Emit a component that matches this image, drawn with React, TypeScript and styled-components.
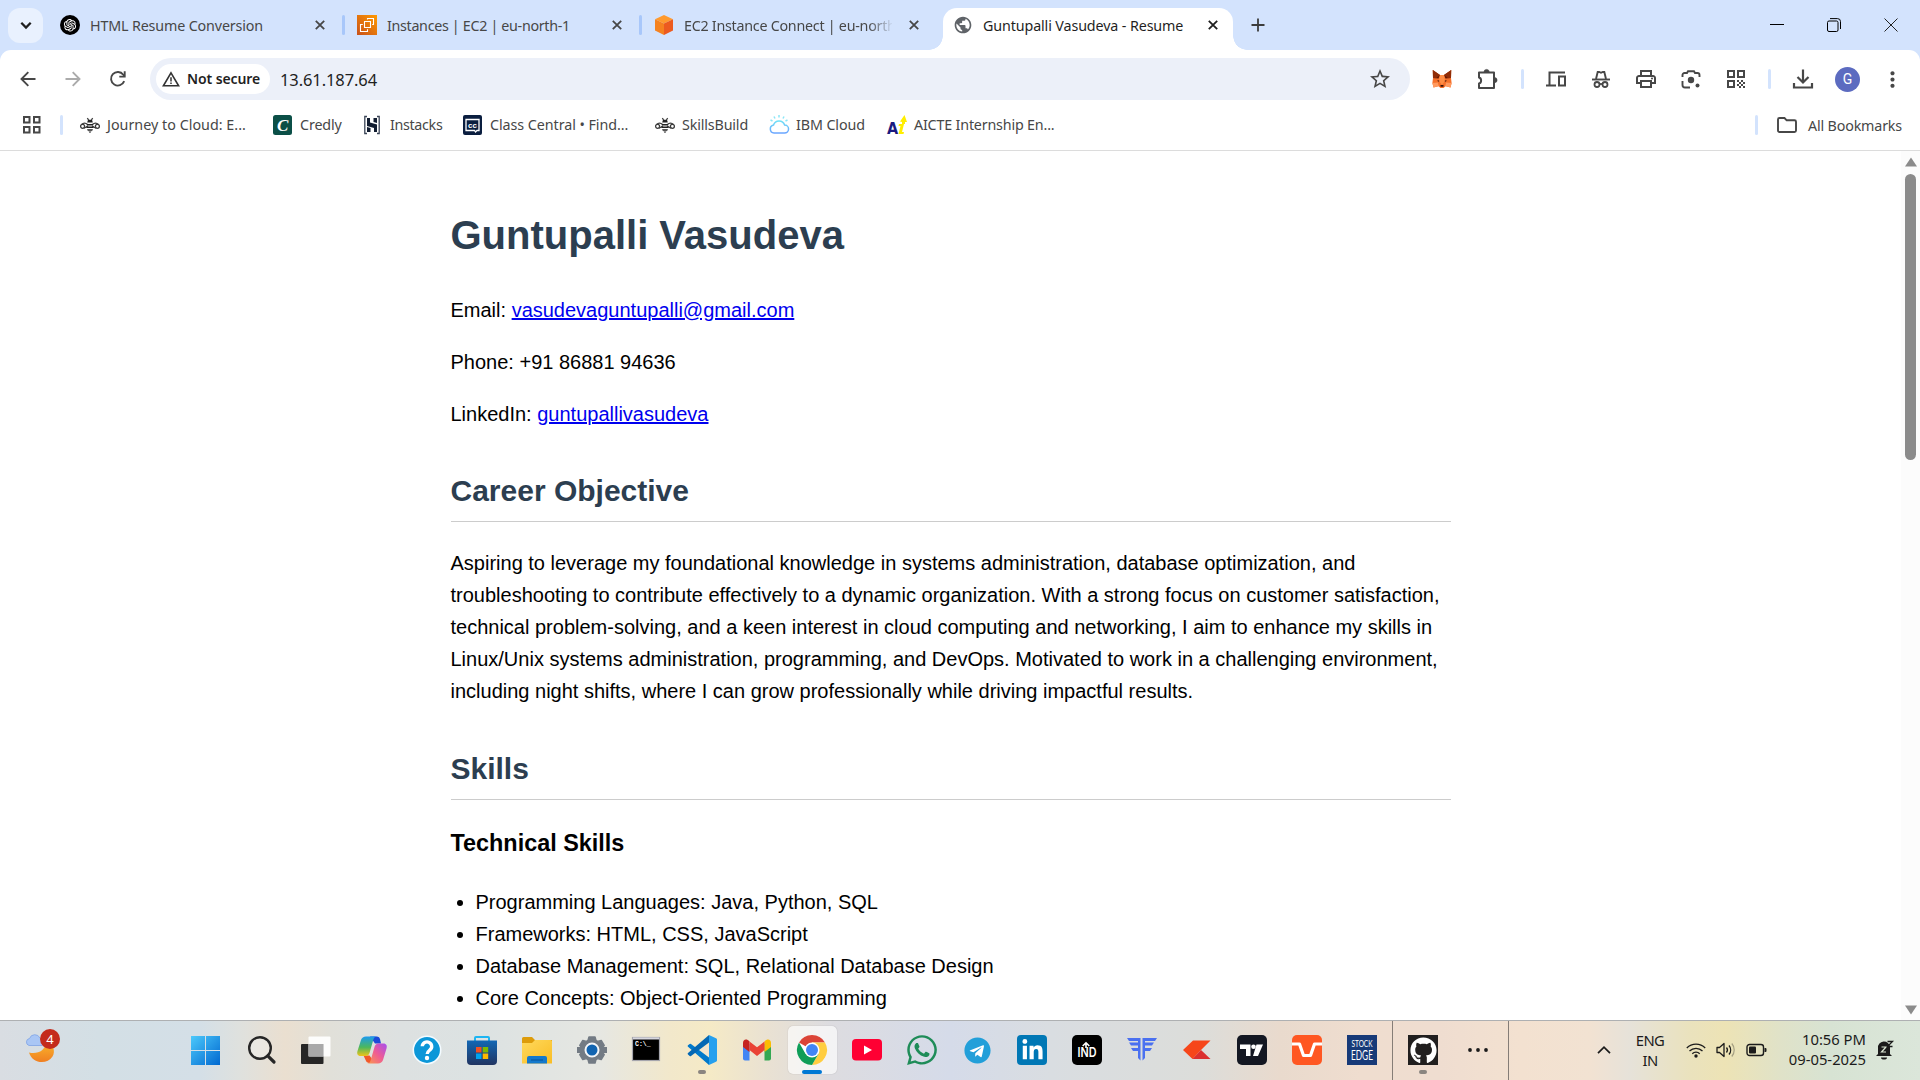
import React from 'react';
import styled, { createGlobalStyle, css } from 'styled-components';
import { MdOutlinePrint, MdQrCode, MdStarBorder, MdMoreVert, MdPublic } from 'react-icons/md';
import { AiOutlineOpenAI } from 'react-icons/ai';
import { FaGithub, FaWhatsapp, FaTelegram, FaLinkedinIn } from 'react-icons/fa';

const ui = `'Noto Sans', 'Open Sans', sans-serif`;

const GlobalStyle = createGlobalStyle`
  html, body { margin: 0; padding: 0; overflow: hidden; background: #fff; }
  *, *::before, *::after { box-sizing: border-box; }
  svg { overflow: visible; }
`;

const Screen = styled.div`
  width: 1920px;
  height: 1080px;
  display: flex;
  flex-direction: column;
  overflow: hidden;
  font-family: ${ui};
  background: #fff;
`;

/* ---------- Tab strip ---------- */
const TabStrip = styled.div`
  flex: none;
  height: 50px;
  display: flex;
  align-items: stretch;
  background: #d3e3fd;
  padding-left: 8px;
`;
const SearchTabs = styled.div`
  width: 35px;
  height: 35px;
  margin: 8px 5px 0 0;
  border-radius: 12px;
  background: #e9f1fe;
  display: flex;
  align-items: center;
  justify-content: center;
`;
const Tab = styled.div<{ $active?: boolean }>`
  position: relative;
  width: 297px;
  display: flex;
  align-items: center;
  padding-left: 12px;
  color: #474747;
  ${(p) =>
    p.$active &&
    css`
      width: 290px;
      margin: 8px 0 0 4px;
      padding: 0 0 8px 10px;
      background: #fff;
      border-radius: 14px 14px 0 0;
      color: #1f1f1f;
      &::before,
      &::after {
        content: '';
        position: absolute;
        bottom: 0;
        width: 14px;
        height: 14px;
      }
      &::before {
        left: -14px;
        background: radial-gradient(circle at 0 0, transparent 13.5px, #fff 14px);
      }
      &::after {
        right: -14px;
        background: radial-gradient(circle at 100% 0, transparent 13.5px, #fff 14px);
      }
    `}
`;
const TabIcon = styled.span`
  flex: none;
  width: 20px;
  height: 20px;
  display: flex;
`;
const TabTitle = styled.span<{ $ls?: number; $fade?: boolean }>`
  flex: none;
  width: 208px;
  margin-left: 10px;
  padding-top: 2px;
  font-size: 14.3px;
  line-height: 24px;
  white-space: nowrap;
  overflow: hidden;
  letter-spacing: ${(p) => p.$ls ?? -0.15}px;
  ${(p) => p.$fade && css`mask-image: linear-gradient(90deg, #000 184px, transparent 210px);`}
`;
const CloseCell = styled.span`
  flex: none;
  width: 30px;
  margin-left: 7px;
  display: flex;
  justify-content: center;
`;
const TabDivider = styled.span`
  width: 3px;
  height: 20px;
  border-radius: 2px;
  background: #a8c7fa;
  margin-left: 7px;
`;
const NewTab = styled.div`
  width: 50px;
  display: flex;
  align-items: center;
  justify-content: center;
`;
const WindowButtons = styled.div`
  margin-left: auto;
  padding-right: 1px;
  display: flex;
`;
const WindowButton = styled.div`
  width: 57px;
  display: flex;
  align-items: center;
  justify-content: center;
`;

/* ---------- Toolbar ---------- */
const ToolbarWrap = styled.div`
  flex: none;
  background: #d3e3fd;
`;
const Toolbar = styled.div`
  height: 58px;
  display: flex;
  align-items: center;
  padding-left: 5px;
  background: #fff;
  border-radius: 11px 11px 0 0;
`;
const Cell = styled.div<{ $w?: number }>`
  flex: none;
  width: ${(p) => p.$w ?? 45}px;
  height: 42px;
  display: flex;
  align-items: center;
  justify-content: center;
  color: #474747;
`;
const Omnibox = styled.div`
  flex: none;
  width: 1260px;
  height: 42px;
  margin: 0 9px 0 10px;
  padding: 0 18px 0 6px;
  border-radius: 21px;
  background: #ecf0f9;
  display: flex;
  align-items: center;
  color: #474747;
`;
const SecurityChip = styled.div`
  width: 114px;
  height: 30px;
  border-radius: 15px;
  background: #fff;
  display: flex;
  align-items: center;
  gap: 7px;
  padding: 0 0 1px 6px;
  font-size: 14px;
  font-weight: 600;
  letter-spacing: -0.1px;
  white-space: nowrap;
  color: #1f1f1f;
`;
const Url = styled.span`
  flex: 1;
  margin-left: 10px;
  font-size: 16.5px;
  letter-spacing: -0.1px;
  color: #1f1f1f;
`;
const Bar = styled.span`
  width: 3px;
  height: 20px;
  border-radius: 2px;
  background: #d3e3fd;
`;
const Avatar = styled.span`
  width: 25px;
  height: 25px;
  border-radius: 50%;
  background: #5c6bc0;
  color: #fff;
  font-family: Roboto, sans-serif;
  font-size: 14px;
  display: flex;
  align-items: center;
  justify-content: center;
`;

/* ---------- Bookmarks ---------- */
const Bookmarks = styled.div`
  flex: none;
  height: 43px;
  display: flex;
  align-items: center;
  padding: 0 18px 8px 22px;
  background: #fff;
  border-bottom: 1px solid #dcdcdc;
  color: #474747;
  font-size: 14.3px;
`;
const AppsCell = styled.div`
  width: 37px;
  display: flex;
`;
const FirstBar = styled(Bar)`
  margin: 0 17px 0 1px;
`;
const Bookmark = styled.div<{ $w?: number; $ls?: number }>`
  flex: none;
  width: ${(p) => (p.$w ? `${p.$w}px` : 'auto')};
  display: flex;
  align-items: center;
  gap: 7px;
  line-height: 24px;
  white-space: nowrap;
  letter-spacing: ${(p) => p.$ls ?? -0.12}px;
`;
const AllBookmarks = styled.div`
  margin-left: auto;
  display: flex;
  align-items: center;
  letter-spacing: -0.18px;
  gap: 11px;
`;
const AllBar = styled(Bar)`
  margin-right: 8px;
`;

/* ---------- Page ---------- */
const Viewport = styled.div`
  flex: none;
  height: 869px;
  display: flex;
  overflow: hidden;
`;
const Page = styled.main`
  width: 1901px;
  height: 869px;
  overflow: hidden;
  font-family: 'Liberation Sans', Arial, sans-serif;
  font-size: 20px;
  line-height: 1.6;
  color: #000;
`;
const Resume = styled.article`
  width: 1000px;
  margin: 0 auto;
  padding-top: 52px;
`;
const Name = styled.h1`
  font-size: 40px;
  margin: 0 0 26.8px;
  color: #2c3e50;
`;
const Section = styled.h2`
  font-size: 30px;
  margin: 37.1px 0 25.3px;
  padding-bottom: 6.25px;
  border-bottom: 1px solid #ccc;
  color: #2c3e50;
`;
const SubSection = styled.h3`
  font-size: 23.4px;
  margin: 23.4px 0;
`;
const Text = styled.p`
  margin: 20px 0;
`;
const Link = styled.a`
  color: #0000ee;
  text-decoration: underline;
`;
const List = styled.ul`
  margin: 0;
  padding-left: 25px;
`;
const Scrollbar = styled.div`
  width: 19px;
  display: flex;
  flex-direction: column;
  align-items: center;
  justify-content: space-between;
  background: #fcfcfc;
  padding: 6px 0 5px;
`;
const Thumb = styled.div`
  width: 11px;
  height: 286px;
  margin: 7px 0 auto;
  border-radius: 6px;
  background: #8b8b8b;
`;

/* ---------- Taskbar ---------- */
const Taskbar = styled.footer`
  flex: none;
  height: 60px;
  display: flex;
  align-items: stretch;
  border-top: 1px solid #aeb0b2;
  background: linear-gradient(
    90deg,
    #d9dde2 0, #d3dfe5 100px, #d4dfe7 200px, #dfe1de 240px, #eadfd0 285px, #e1e0d9 330px,
    #dde1e1 400px, #dce2e2 480px, #e6e7e2 600px, #f2e8cb 670px, #f5eac6 710px, #e9e1d3 770px,
    #dddce0 830px, #d5dbe9 950px, #d9dde1 1050px, #dcddda 1200px, #e9dacd 1280px, #efddcf 1360px,
    #efddd0 1440px, #f3e1d0 1520px, #f2e2d2 1590px, #e6e2d9 1630px, #eae2bd 1690px, #ede3b5 1725px,
    #e0e2c8 1780px, #d7e3d3 1830px, #dbe6da 1920px
  );
`;
const Weather = styled.div`
  position: relative;
  width: 179.5px;
  padding: 12px 0 0 25px;
`;
const Badge = styled.span`
  position: absolute;
  left: 40px;
  top: 8px;
  width: 20px;
  height: 20px;
  border-radius: 50%;
  background: #c42b1c;
  color: #fff;
  font-size: 13px;
  line-height: 20px;
  text-align: center;
`;
const AppButton = styled.div<{ $active?: boolean; $run?: boolean }>`
  position: relative;
  flex: none;
  width: 55px;
  padding-bottom: 1px;
  display: flex;
  align-items: center;
  justify-content: center;
  ${(p) =>
    p.$active &&
    css`
      width: 49px;
      margin: 5px 3px 6px;
      padding: 0;
      border-radius: 5px;
      background: rgba(255, 255, 255, 0.65);
      box-shadow: 0 0 1px rgba(0, 0, 0, 0.3);
      &::after {
        content: '';
        position: absolute;
        bottom: 0;
        width: 20px;
        height: 4px;
        border-radius: 2px;
        background: #0078d4;
      }
    `}
  ${(p) =>
    p.$run &&
    css`
      &::after {
        content: '';
        position: absolute;
        bottom: 6px;
        width: 8px;
        height: 4px;
        border-radius: 2px;
        background: #8a8580;
      }
    `}
`;
const Pinned = styled.div`
  display: flex;
  width: 1212.5px;
`;
const Overflow = styled.div`
  display: flex;
  width: 117px;
  padding-left: 2.5px;
  border-left: 1px solid #857d77;
  border-right: 1px solid #857d77;
`;
const Tray = styled.div`
  flex: 1;
  display: flex;
  align-items: center;
  justify-content: flex-end;
  padding-bottom: 2px;
  color: #1b1b1b;
  font-size: 14.8px;
  line-height: 20px;
`;
const Language = styled.div`
  width: 48px;
  margin-left: 15px;
  text-align: center;
  letter-spacing: -0.6px;
`;
const Indicators = styled.div`
  display: flex;
  align-items: center;
  gap: 10px;
  margin-left: 12px;
`;
const Clock = styled.div`
  width: 99px;
  padding-bottom: 2px;
  text-align: right;
  white-space: nowrap;
  letter-spacing: 0;
`;
const BellCell = styled.div`
  display: flex;
  margin: 0 26px 0 10px;
`;
const Tile = styled.span<{ $bg: string; $c?: string; $r?: number; $s?: number }>`
  flex: none;
  width: ${(p) => p.$s ?? 30}px;
  height: ${(p) => p.$s ?? 30}px;
  border-radius: ${(p) => p.$r ?? 5}px;
  background: ${(p) => p.$bg};
  color: ${(p) => p.$c ?? '#fff'};
  display: flex;
  align-items: center;
  justify-content: center;
`;

type SvgProps = { s?: number; h?: number; vb?: string; children: React.ReactNode };
const Svg = ({ s = 20, h, vb, children }: SvgProps) => (
  <svg width={s} height={h ?? s} viewBox={vb ?? `0 0 ${s} ${h ?? s}`} fill="none">
    {children}
  </svg>
);

const Cross = ({ dark }: { dark?: boolean }) => (
  <Svg s={10}>
    <path d="M0.8 0.8 9.2 9.2M9.2 0.8 0.8 9.2" stroke={dark ? '#1f1f1f' : '#474747'} strokeWidth="1.8" />
  </Svg>
);

const Bee = () => (
  <Svg>
    <g stroke="#3c3c3c" strokeWidth="1.300">
      <circle cx="2.600" cy="11.300" r="2" />
      <circle cx="17.400" cy="11.300" r="2" />
      <path d="M1.500 9.500C3.500 7.600 6 8 8 9.800M18.500 9.500C16.500 7.600 14 8 12 9.800M4 13.200 8 11M16 13.200 12 11" />
      <path d="M7.300 3.200l1.300 1.600M12.700 3.200l-1.300 1.600" />
    </g>
    <path d="M8 4.800h4l.8 2.700H7.200zM6.800 9h6.400v1.500H6.800zM6.400 11.500h7.200v1.600H6.400zM7 14.200h6l-.8 1.500H7.800zM8.500 16.500h3L10 18z" fill="#222" />
  </Svg>
);

const Tabs = () => (
  <TabStrip>
    <SearchTabs>
      <Svg s={12} h={9}>
        <path d="M1.300 1.800 6 6.500l4.700-4.700" stroke="#1f1f1f" strokeWidth="2.300" />
      </Svg>
    </SearchTabs>
    <Tab>
      <TabIcon>
        <Tile $bg="#000" $r={10} $s={20}>
          <AiOutlineOpenAI size={16} />
        </Tile>
      </TabIcon>
      <TabTitle>HTML Resume Conversion</TabTitle>
      <CloseCell><Cross /></CloseCell>
      <TabDivider />
    </Tab>
    <Tab>
      <TabIcon>
        <Svg>
          <defs>
            <linearGradient id="ec2" x1="0" y1="1" x2="1" y2="0">
              <stop stopColor="#c8511b" />
              <stop offset="1" stopColor="#f90" />
            </linearGradient>
          </defs>
          <rect width="20" height="20" fill="url(#ec2)" />
          <path d="M7.500 6.500h6v6h-6zM10.500 4.500v-1h6v6h-1.300M5.800 9.500H3.500v7h7v-2.300" stroke="#fff" strokeWidth="1.100" />
        </Svg>
      </TabIcon>
      <TabTitle $ls={-0.32}>Instances | EC2 | eu-north-1</TabTitle>
      <CloseCell><Cross /></CloseCell>
      <TabDivider />
    </Tab>
    <Tab>
      <TabIcon>
        <Svg>
          <path d="M10 0l9 4.200-9 4.400-9-4.400z" fill="#ff9a2e" />
          <path d="M1 4.200l9 4.400V20l-9-4.400z" fill="#f58220" />
          <path d="M19 4.200l-9 4.400V20l9-4.400z" fill="#ec5b20" />
        </Svg>
      </TabIcon>
      <TabTitle $ls={-0.26} $fade>EC2 Instance Connect | eu-north</TabTitle>
      <CloseCell><Cross /></CloseCell>
    </Tab>
    <Tab $active>
      <TabIcon><MdPublic size={20} color="#5f6368" /></TabIcon>
      <TabTitle $ls={-0.12}>Guntupalli Vasudeva - Resume</TabTitle>
      <CloseCell><Cross dark /></CloseCell>
    </Tab>
    <NewTab>
      <Svg s={14}><path d="M7 .5v13M.5 7h13" stroke="#3c3c3c" strokeWidth="1.800" /></Svg>
    </NewTab>
    <WindowButtons>
      <WindowButton>
        <Svg s={14}><path d="M0 6.500h14" stroke="#000" /></Svg>
      </WindowButton>
      <WindowButton>
        <Svg s={14}>
          <rect x=".5" y="3" width="10.500" height="10.500" rx="1.500" stroke="#000" />
          <path d="M3 .6h7.500a3 3 0 0 1 3 3V11" stroke="#000" />
        </Svg>
      </WindowButton>
      <WindowButton>
        <Svg s={14}><path d="M.5.5l13 13M13.500.5l-13 13" stroke="#222" /></Svg>
      </WindowButton>
    </WindowButtons>
  </TabStrip>
);

const MetaMask = () => (
  <Svg>
    <path d="M.8 1 8 6h4l7.200-5L19 9l.6 5-1 4.500-5-1.200L11.500 19h-3l-2-1.700-5 1.200L.4 14 1 9z" fill="#f5702b" />
    <path d="M.8 1 8 6l-1.500 3.500L1 9zM19.200 1 12 6l1.500 3.500L19 9z" fill="#661800" />
    <path d="M.8 1 8 6 3.500 9.500 1 9zM19.200 1 12 6l4.500 3.500L19 9z" fill="#c6440f" fillOpacity=".45" />
    <path d="M8 6h4l1 6-3 4-3-4z" fill="#ff8d45" />
    <path d="M.4 14l5.500-.5.8 3.500-5.200 1.500zM19.600 14l-5.500-.5-.8 3.500 5.200 1.500z" fill="#ff9a5f" />
    <path d="M5.500 11l2.200 1-1.700.8zM14.500 11l-2.200 1 1.700.8zM8.500 16h3v1.800h-3z" fill="#3a1208" />
  </Svg>
);

const ToolbarRow = () => (
  <ToolbarWrap>
    <Toolbar>
      <Cell>
        <Svg s={16}><path d="M15.500 8H1.500M8.300 1.200 1.500 8l6.800 6.800" stroke="#474747" strokeWidth="1.900" /></Svg>
      </Cell>
      <Cell>
        <Svg s={16}><path d="M.5 8h14M7.700 1.200 14.500 8l-6.800 6.800" stroke="#ababab" strokeWidth="1.900" /></Svg>
      </Cell>
      <Cell>
        <Svg s={16}>
          <path d="M14.200 10.200A6.800 6.800 0 1 1 13.300 3.700l1.200 1.400" stroke="#474747" strokeWidth="1.900" />
          <path d="M14.700.3v5.300H9.300" stroke="#474747" strokeWidth="1.900" />
        </Svg>
      </Cell>
      <Omnibox>
        <SecurityChip>
          <Svg s={18} h={16}>
            <path d="M9 1.800 16.600 14.800H1.400z" stroke="#333" strokeWidth="1.600" />
            <path d="M9 6.300v4.200M9 11.500v1.600" stroke="#333" strokeWidth="1.500" />
          </Svg>
          Not secure
        </SecurityChip>
        <Url>13.61.187.64</Url>
        <MdStarBorder size={24} />
      </Omnibox>
      <Cell $w={46}><MetaMask /></Cell>
      <Cell $w={46}>
        <Svg s={22}>
          <path d="M2 4.500h15V20H2v-4.600c2.800-.6 2.800-5.400 0-6z" stroke="#474747" strokeWidth="2" strokeLinejoin="round" />
          <path d="M7 4a2.600 2.600 0 0 1 5.200 0zM17.500 9.500a2.600 2.600 0 0 1 0 5.200z" fill="#474747" stroke="#474747" strokeWidth=".6" />
        </Svg>
      </Cell>
      <Cell $w={22}><Bar /></Cell>
      <Cell>
        <Svg s={20}>
          <path d="M19 3.500H3.500v12M0 16.500h10" stroke="#474747" strokeWidth="2" />
          <rect x="13" y="7.500" width="6" height="9" stroke="#474747" strokeWidth="2" />
        </Svg>
      </Cell>
      <Cell>
        <Svg s={20}>
          <path d="M1 10.500h18" stroke="#474747" strokeWidth="1.900" />
          <path d="M5 10 6.700 3h1.500l1.800.8 1.800-.8h1.500L15 10" stroke="#474747" strokeWidth="1.900" />
          <circle cx="6" cy="15.500" r="2.500" stroke="#474747" strokeWidth="1.800" />
          <circle cx="14" cy="15.500" r="2.500" stroke="#474747" strokeWidth="1.800" />
          <path d="M8.500 15h3" stroke="#474747" strokeWidth="1.800" />
        </Svg>
      </Cell>
      <Cell><MdOutlinePrint size={24} /></Cell>
      <Cell>
        <Svg s={20}>
          <path d="M1.500 8V6a2 2 0 0 1 2-2H6l1-1.800h6L14 4h2.500a2 2 0 0 1 2 2v2M1.500 12v4a2.500 2.500 0 0 0 2.500 2.500h5" stroke="#474747" strokeWidth="1.900" />
          <circle cx="10" cy="11" r="3.200" fill="#474747" />
          <circle cx="16.500" cy="16.500" r="2" fill="#474747" />
        </Svg>
      </Cell>
      <Cell><MdQrCode size={24} /></Cell>
      <Cell $w={22}><Bar /></Cell>
      <Cell $w={46}>
        <Svg s={20}>
          <path d="M10 .5v12.500M4.500 8l5.500 5.500L15.500 8M1 14v4.500h18V14" stroke="#474747" strokeWidth="2.200" />
        </Svg>
      </Cell>
      <Cell $w={43}><Avatar>G</Avatar></Cell>
      <Cell $w={46}><MdMoreVert size={25} /></Cell>
    </Toolbar>
  </ToolbarWrap>
);

const BookmarkRow = () => (
  <Bookmarks>
    <AppsCell>
      <Svg>
        <path d="M2 2h5.500v5.500H2zM12 2h5.500v5.500H12zM2 12h5.500v5.500H2zM12 12h5.500v5.500H12z" stroke="#474747" strokeWidth="2" />
      </Svg>
    </AppsCell>
    <FirstBar />
    <Bookmark $w={193} $ls={0.02}><Bee />Journey to Cloud: E...</Bookmark>
    <Bookmark $w={90}>
      <Svg>
        <rect width="19" height="20" rx="2.500" fill="#0b4f47" />
        <text x="9.500" y="16" fill="#fff" fontSize="17" fontWeight="700" fontStyle="italic" fontFamily="Liberation Serif, serif" textAnchor="middle">C</text>
      </Svg>
      Credly
    </Bookmark>
    <Bookmark $w={100} $ls={-0.33}>
      <Svg>
        <path d="M4 1.500H1.800v17H4M14 1.500h2.200v17H14" stroke="#3b4557" strokeWidth="1.300" />
        <path d="M4 3h3v4.500l7 2V17h-3v-4l-7-2zM4 12l3.500 1V17H4z" fill="#111c30" />
        <path d="M10.500 3H14v5l-3.500-1z" fill="#111c30" />
      </Svg>
      Instacks
    </Bookmark>
    <Bookmark $w={192} $ls={-0.06}>
      <Svg>
        <rect width="19" height="20" rx="2" fill="#0a1e3f" />
        <path d="M3 4.500h13v11h-2l-1.500 1.500-1-1.500H3z" stroke="#fff" strokeWidth="1.300" />
        <text x="9.500" y="13" fill="#fff" fontSize="8" fontWeight="700" fontFamily="Liberation Sans, sans-serif" textAnchor="middle">cc</text>
      </Svg>
      Class Central • Find...
    </Bookmark>
    <Bookmark $w={114} $ls={-0.15}><Bee />SkillsBuild</Bookmark>
    <Bookmark $w={118} $ls={-0.1}>
      <Svg>
        <defs>
          <linearGradient id="ibm" x1="0" y1="0" x2="0" y2="1">
            <stop stopColor="#6fe0f5" />
            <stop offset="1" stopColor="#6aa5ff" />
          </linearGradient>
        </defs>
        <path d="M5 18a4 4 0 0 1-.5-7.900A5.800 5.800 0 0 1 15.600 10 4 4 0 0 1 15.500 18z" stroke="url(#ibm)" strokeWidth="1.500" />
        <path d="M10 0v2.500M5 1.500l1 2M15 1.500l-1 2M1.500 5l2 1M18.500 5l-2 1" stroke="#8be6f7" strokeWidth="1.500" />
      </Svg>
      IBM Cloud
    </Bookmark>
    <Bookmark $ls={-0.18}>
      <Svg>
        <text x="0" y="19" fill="#1a1a80" fontSize="15" fontWeight="700" fontFamily="DejaVu Sans, sans-serif" textLength="11" lengthAdjust="spacingAndGlyphs">A</text>
        <path d="M17.500 0l2.500 7h-2v2h-3V7l-2-.5zM12 9h5l-2 8h2l-.5 2h-5l2-8h-2z" fill="#ffee00" />
      </Svg>
      AICTE Internship En...
    </Bookmark>
    <AllBookmarks>
      <AllBar />
      <Svg s={20} h={16}>
        <path d="M1 2.500A1.500 1.500 0 0 1 2.500 1h5l2.200 2.300h7.800A1.500 1.500 0 0 1 19 4.800v8.700a1.500 1.500 0 0 1-1.500 1.500h-15A1.500 1.500 0 0 1 1 13.500z" stroke="#474747" strokeWidth="1.900" />
      </Svg>
      All Bookmarks
    </AllBookmarks>
  </Bookmarks>
);

const ResumePage = () => (
  <Viewport>
    <Page>
      <Resume>
        <Name>Guntupalli Vasudeva</Name>
        <Text>Email: <Link>vasudevaguntupalli@gmail.com</Link></Text>
        <Text>Phone: +91 86881 94636</Text>
        <Text>LinkedIn: <Link>guntupallivasudeva</Link></Text>
        <Section>Career Objective</Section>
        <Text>
          Aspiring to leverage my foundational knowledge in systems administration, database optimization, and
          troubleshooting to contribute effectively to a dynamic organization. With a strong focus on customer
          satisfaction, technical problem-solving, and a keen interest in cloud computing and networking, I aim to
          enhance my skills in Linux/Unix systems administration, programming, and DevOps. Motivated to work in a
          challenging environment, including night shifts, where I can grow professionally while driving impactful
          results.
        </Text>
        <Section>Skills</Section>
        <SubSection>Technical Skills</SubSection>
        <List>
          <li>Programming Languages: Java, Python, SQL</li>
          <li>Frameworks: HTML, CSS, JavaScript</li>
          <li>Database Management: SQL, Relational Database Design</li>
          <li>Core Concepts: Object-Oriented Programming</li>
        </List>
      </Resume>
    </Page>
    <Scrollbar>
      <Svg s={12} h={10}><path d="M6 0.500 12 9.500H0z" fill="#8b8b8b" /></Svg>
      <Thumb />
      <Svg s={12} h={10}><path d="M6 9.500 12 .5H0z" fill="#8b8b8b" /></Svg>
    </Scrollbar>
  </Viewport>
);

const TaskbarRow = () => (
  <Taskbar>
    <Weather>
      <Svg s={32} h={30}>
        <defs>
          <linearGradient id="moon" x1="0" y1="0" x2="0" y2="1">
            <stop stopColor="#f9b62c" />
            <stop offset="1" stopColor="#f07f22" />
          </linearGradient>
        </defs>
        <path d="M4 19.500C13 21.500 20 17.500 21.500 9 29 11 30.500 19 27.500 23.500 22 32 7.500 31 4 19.500z" fill="url(#moon)" />
        <path d="M4 12.500a3.600 3.600 0 0 1 .5-7 5.600 5.600 0 0 1 10.500-.3A4 4 0 0 1 17 12.500z" fill="#a9c6f5" stroke="#7fa3e6" strokeWidth=".8" />
      </Svg>
      <Badge>4</Badge>
    </Weather>
    <Pinned>
      <AppButton>
        <Svg s={30} vb="1 0 30 30">
          <defs>
            <linearGradient id="win" x1="0" y1="0" x2="1" y2="1">
              <stop stopColor="#4cc9fb" />
              <stop offset="1" stopColor="#0068d0" />
            </linearGradient>
          </defs>
          <path d="M0 1h14v14H0zM15 1h14v14H15zM0 16h14v14H0zM15 16h14v14H15z" fill="url(#win)" />
        </Svg>
      </AppButton>
      <AppButton>
        <Svg s={30}>
          <circle cx="13" cy="13" r="10.800" stroke="#262626" strokeWidth="2.400" fill="#ffffff40" />
          <path d="M20.800 20.800 27 27" stroke="#262626" strokeWidth="3.200" strokeLinecap="round" />
        </Svg>
      </AppButton>
      <AppButton>
        <Svg s={30} vb="1 0 30 30">
          <rect y="9" width="22.500" height="20" rx="1" fill="#262626" />
          <rect x="7.500" y="1.500" width="22" height="20" rx="1" fill="#fff" fillOpacity=".92" />
          <path d="M7.500 9h15v12.500h-15z" fill="#a9a9a9" />
        </Svg>
      </AppButton>
      <AppButton>
        <Svg s={30}>
          <defs>
            <linearGradient id="cpa" x1="0" y1="0" x2="0" y2="1">
              <stop stopColor="#1b9af0" />
              <stop offset=".55" stopColor="#4cb85c" />
              <stop offset="1" stopColor="#f0c419" />
            </linearGradient>
            <linearGradient id="cpb" x1="1" y1="0" x2="0" y2="1">
              <stop stopColor="#a64df0" />
              <stop offset=".5" stopColor="#ef5c93" />
              <stop offset="1" stopColor="#fb9a4b" />
            </linearGradient>
          </defs>
          <path d="M13 1.500h7a3 3 0 0 1 3 2.500l1 4.500h-6z" fill="#1c4ad8" />
          <path d="M6.500 20.500h6L18 28h-5.500a4 4 0 0 1-3.800-2.800z" fill="#f2592a" />
          <path d="M9 1.500h11c-2 0-3 1-3.600 3L12.500 18c-.6 2-2 3-4 3H3.500C.5 21-.3 18.500.5 16L4 5c.8-2.300 2.500-3.500 5-3.500z" fill="url(#cpa)" />
          <path d="M21 28.500H10c2 0 3-1 3.600-3L17.500 12c.6-2 2-3.500 4-3.500h5c3 0 3.800 2.500 3 5L26 25c-.8 2.300-2.500 3.500-5 3.500z" fill="url(#cpb)" />
        </Svg>
      </AppButton>
      <AppButton>
        <Svg s={30}>
          <circle cx="15" cy="15" r="13.700" fill="#0c97d8" stroke="#f4fbff" strokeWidth="1.600" />
          <path d="M10.300 11.200a4.700 4.500 0 1 1 7.500 3.800c-1.700 1.300-2.600 2-2.600 4" stroke="#fff" strokeWidth="3.400" />
          <circle cx="15" cy="23" r="2.200" fill="#fff" />
        </Svg>
      </AppButton>
      <AppButton>
        <Svg s={30}>
          <defs>
            <linearGradient id="store" x1="0" y1="0" x2="0" y2="1">
              <stop stopColor="#1267b4" />
              <stop offset="1" stopColor="#213562" />
            </linearGradient>
          </defs>
          <path d="M8 6V3a1 1 0 0 1 1-1h12a1 1 0 0 1 1 1v3" stroke="#1cb5f2" strokeWidth="2" />
          <path d="M0 5.500h30V26a4 4 0 0 1-4 4H4a4 4 0 0 1-4-4z" fill="url(#store)" />
          <path d="M9 12h5.500v5.500H9z" fill="#f25022" />
          <path d="M15.700 12h5.500v5.500h-5.500z" fill="#7fba00" />
          <path d="M9 18.500h5.500V24H9z" fill="#00a4ef" />
          <path d="M15.700 18.500h5.500V24h-5.500z" fill="#ffb900" />
        </Svg>
      </AppButton>
      <AppButton>
        <Svg s={30}>
          <defs>
            <linearGradient id="fold" x1="0" y1="0" x2="1" y2="1">
              <stop stopColor="#ffd95c" />
              <stop offset="1" stopColor="#f9bd25" />
            </linearGradient>
          </defs>
          <path d="M0 3.500A1.500 1.500 0 0 1 1.500 2H10l3 3H30v5H0z" fill="#dd9c0b" />
          <path d="M0 8h10l3-3h15.500A1.500 1.500 0 0 1 30 6.500V28.500H0z" fill="url(#fold)" />
          <path d="M5 28.500V23a2 2 0 0 1 2-2h16a2 2 0 0 1 2 2v5.500z" fill="#1479cc" />
          <path d="M9 25h12" stroke="#0a5aa4" strokeWidth="1.300" />
        </Svg>
      </AppButton>
      <AppButton>
        <Svg s={30}>
          <path
            d="M11 5.500 12 2h6l1 3.500 1.500.9 3.700-1 3 5-2.500 2.700v3.800l2.500 2.700-3 5-3.700-1-1.500.9-1 3.500h-6l-1-3.500-1.500-.9-3.700 1-3-5 2.500-2.700v-3.800L2.800 10.400l3-5 3.700 1z"
            fill="#737b84"
            strokeLinejoin="round"
            strokeWidth="1.500"
            stroke="#737b84"
          />
          <path d="M0 15h30" stroke="#737b84" strokeWidth="6" strokeLinecap="butt" />
          <circle cx="15" cy="15" r="6.500" fill="#1264b0" stroke="#f4f6f8" strokeWidth="2" />
        </Svg>
      </AppButton>
      <AppButton>
        <Svg s={28} h={24} vb="1 1 28 24">
          <rect x=".5" y=".5" width="27" height="23" fill="#000" stroke="#a6a6ad" strokeWidth="1.200" />
          <path d="M1 1.500h26" stroke="#d6d6de" strokeWidth="2" />
          <text x="3" y="8.500" fill="#fff" fontSize="6.500" fontWeight="700" fontFamily="Liberation Mono, monospace">C:\_</text>
        </Svg>
      </AppButton>
      <AppButton $run>
        <Svg s={30}>
          <path d="M22 0v30L1 11.800a1 1 0 0 1 0-1.500L2.700 9a1 1 0 0 1 1.300 0L22 22.500z" fill="#0179cb" />
          <path d="M22 7.500 4 21a1 1 0 0 1-1.300 0L1 19.600a1 1 0 0 1 0-1.500L22 0z" fill="#0468b4" />
          <path d="M22 0l7 3.200a1.500 1.500 0 0 1 1 1.300v21a1.500 1.500 0 0 1-1 1.300L22 30z" fill="#26a0ee" />
          <path d="M22 8.500v13L13.500 15z" fill="#f1e5cf" />
        </Svg>
      </AppButton>
      <AppButton>
        <Svg s={28} h={22}>
          <path d="M0 5h6.500v16.500H2A2 2 0 0 1 0 19.500z" fill="#4285f4" />
          <path d="M21.500 5H28v14.500a2 2 0 0 1-2 2h-4.500z" fill="#34a853" />
          <path d="M21.500 2.500C24.500-1 28 .5 28 4v4l-6.500 5z" fill="#fbbc04" />
          <path d="M0 4C0 .5 3.500-1 6.500 2.500V13L0 8z" fill="#c5221f" />
          <path d="M6.500 2.500 14 8.300l7.500-5.800V11L14 17l-7.500-6z" fill="#ea4335" />
        </Svg>
      </AppButton>
      <AppButton $active>
        <Svg s={30}>
          <circle cx="15" cy="15" r="15" fill="#fff" />
          <path d="M15 15 2 7.500A15 15 0 0 1 28 7.500H15z" fill="#db4437" />
          <path d="M15 7.500h13A15 15 0 0 1 15 30l6.500-11.200z" fill="#ffcd40" />
          <path d="M2 7.500A15 15 0 0 0 15 30l6.500-11.200L15 15l-6.500 3.800z" fill="#0f9d58" />
          <circle cx="15" cy="15" r="7.500" fill="#fff" />
          <circle cx="15" cy="15" r="6" fill="#4285f4" />
        </Svg>
      </AppButton>
      <AppButton>
        <Svg s={30} h={22}>
          <rect width="30" height="21.500" rx="4" fill="#ff0033" />
          <path d="M12 6.500 20 11l-8 4.500z" fill="#fff" />
        </Svg>
      </AppButton>
      <AppButton><FaWhatsapp size={34} color="#1e8c58" /></AppButton>
      <AppButton>
        <Tile $bg="radial-gradient(circle, #fff 11px, transparent 12px)" $c="#229fd9">
          <FaTelegram size={27} />
        </Tile>
      </AppButton>
      <AppButton><Tile $bg="#0077b5" $r={4}><FaLinkedinIn size={23} /></Tile></AppButton>
      <AppButton>
        <Tile $bg="#000">
          <Svg s={30}>
            <text x="15" y="22" fill="#fff" fontSize="13" fontWeight="600" fontFamily="Inter, sans-serif" textAnchor="middle" textLength="19" lengthAdjust="spacingAndGlyphs">IND</text>
            <path d="M14 13V8.500M10.700 11 14 7.800l3.300 3.200" stroke="#fff" strokeWidth="1.600" />
          </Svg>
        </Tile>
      </AppButton>
      <AppButton>
        <Svg s={30}>
          <path d="M0 3h13.500v22.500L11 23V16H6l-2-3h7v-2.500H4L2 7.500h9V6H2z" fill="#4a70f0" />
          <path d="M30 3H15.500v22.500L18 23V16h5l2-3h-7v-2.500h7l2-3h-9V6h10z" fill="#4a70f0" />
        </Svg>
      </AppButton>
      <AppButton>
        <Svg s={28} h={20}>
          <path d="M10 .5h17.500L18 10l-8.500 9L0 10z" fill="#f6461a" />
          <path d="M18 10l9.500 9h-18z" fill="#db3030" />
        </Svg>
      </AppButton>
      <AppButton>
        <Tile $bg="#131722">
          <Svg s={30}>
            <path d="M3 9.500h10.500V21H9v-7H3zM19.500 9.500h6.500L21 21h-5z" fill="#fff" />
            <circle cx="16.500" cy="11.800" r="2.300" fill="#fff" />
          </Svg>
        </Tile>
      </AppButton>
      <AppButton>
        <Tile $bg="#ff5722">
          <Svg s={30}>
            <path d="M0 9h7.500l4 11.500h7L22.500 9H30" stroke="#fff" strokeWidth="3.200" strokeLinejoin="round" />
          </Svg>
        </Tile>
      </AppButton>
      <AppButton>
        <Tile $bg="#173a78" $r={0}>
          <Svg s={30}>
            <text x="15" y="12" fill="#fff" fontSize="10" fontFamily="Lato, sans-serif" textAnchor="middle" textLength="21" lengthAdjust="spacingAndGlyphs">STOCK</text>
            <text x="15" y="25" fill="#fff" fontSize="14" fontFamily="Lato, sans-serif" textAnchor="middle" textLength="22" lengthAdjust="spacingAndGlyphs">EDGE</text>
          </Svg>
        </Tile>
      </AppButton>
    </Pinned>
    <Overflow>
      <AppButton $run><Tile $bg="#211f1f" $r={0}><FaGithub size={27} /></Tile></AppButton>
      <AppButton>
        <Svg s={20} h={4}>
          <circle cx="2" cy="2" r="1.900" fill="#1b1b1b" />
          <circle cx="10" cy="2" r="1.900" fill="#1b1b1b" />
          <circle cx="18" cy="2" r="1.900" fill="#1b1b1b" />
        </Svg>
      </AppButton>
    </Overflow>
    <Tray>
      <Svg s={14} h={8}><path d="M1 7.200 7 1.200l6 6" stroke="#1b1b1b" strokeWidth="1.700" /></Svg>
      <Language>ENG<br />IN</Language>
      <Indicators>
        <Svg s={20} h={16}>
          <path d="M.8 6a13 13 0 0 1 18.400 0M3.500 9a9.200 9.200 0 0 1 13 0M6.300 11.700a5.200 5.200 0 0 1 7.400 0" stroke="#1b1b1b" strokeWidth="1.300" />
          <circle cx="10" cy="14" r="1.700" fill="#1b1b1b" />
        </Svg>
        <Svg s={20} h={16}>
          <path d="M1 5.500h2.500L8 1.500v13l-4.500-4H1z" stroke="#1b1b1b" strokeWidth="1.300" strokeLinejoin="round" />
          <path d="M10.500 5.500a4 4 0 0 1 0 5M13 3.500a7 7 0 0 1 0 9" stroke="#1b1b1b" strokeWidth="1.300" />
          <path d="M15.800 1.500a10 10 0 0 1 0 13" stroke="#1b1b1b55" strokeWidth="1.200" />
        </Svg>
        <Svg s={21} h={14}>
          <rect x="1" y="1.500" width="16.500" height="11" rx="2.500" stroke="#1b1b1b" strokeWidth="1.400" />
          <rect x="3" y="3.500" width="7" height="7" rx="1" fill="#1b1b1b" />
          <path d="M18.500 5h1a1 1 0 0 1 1 1v2a1 1 0 0 1-1 1h-1z" fill="#1b1b1b" />
        </Svg>
      </Indicators>
      <Clock>10:56 PM<br />09-05-2025</Clock>
      <BellCell>
        <Svg s={18} h={20}>
          <path d="M2 14V8a6 6 0 0 1 12-1v7l2 2H0z" fill="#1b1b1b" />
          <path d="M5 17.500h6a3 2 0 0 1-6 0z" fill="#1b1b1b" />
          <path d="M5.500 7h4.500l-4.500 5H10" stroke="#dce6d4" strokeWidth="1.200" />
          <path d="M11.500 1.500h5l-5 5h5" stroke="#1b1b1b" strokeWidth="1.300" />
        </Svg>
      </BellCell>
    </Tray>
  </Taskbar>
);

const App = () => (
  <Screen>
    <GlobalStyle />
    <Tabs />
    <ToolbarRow />
    <BookmarkRow />
    <ResumePage />
    <TaskbarRow />
  </Screen>
);

export default App;
